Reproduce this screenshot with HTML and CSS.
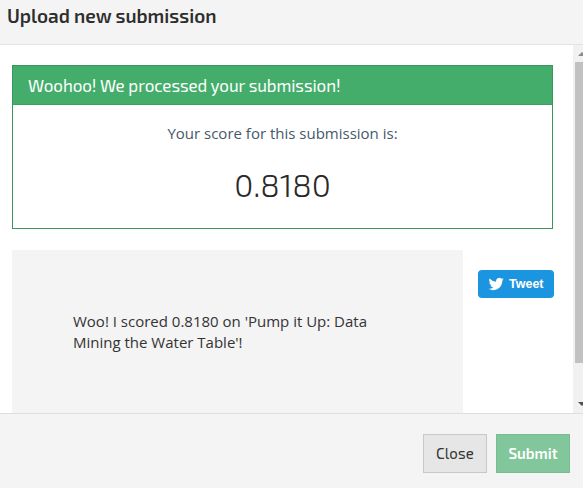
FILE: index.html
```html
<!DOCTYPE html>
<html lang="en">
<head>
<meta charset="utf-8">
<title>Upload new submission</title>
<link rel="stylesheet" href="styles.css">
</head>
<body>
<div class="modal">
  <header class="modal-header"><h1><span>Upload new submission</span></h1></header>
  <main class="modal-body">
    <div class="content">
      <section class="panel">
        <h2 class="panel-heading"><span>Woohoo! We processed your submission!</span></h2>
        <p class="caption"><span>Your score for this submission is:</span></p>
        <div class="score"><span>0.8180</span></div>
      </section>
      <section class="share">
        <p class="message"><span>Woo! I scored 0.8180 on 'Pump it Up: Data</span><br><span>Mining the Water Table'!</span></p>
        <button class="tweet">
          <svg viewBox="0 0 24 24" width="16" height="16"><path fill="#fff" d="M23.643 4.937c-.835.37-1.732.62-2.675.733a4.67 4.67 0 0 0 2.048-2.578 9.3 9.3 0 0 1-2.958 1.13 4.66 4.66 0 0 0-7.938 4.25A13.229 13.229 0 0 1 2.516 3.604a4.66 4.66 0 0 0 1.442 6.22 4.647 4.647 0 0 1-2.11-.583v.06a4.66 4.66 0 0 0 3.737 4.568 4.692 4.692 0 0 1-2.104.08 4.661 4.661 0 0 0 4.352 3.234 9.348 9.348 0 0 1-5.786 1.995 9.5 9.5 0 0 1-1.112-.065 13.175 13.175 0 0 0 7.14 2.093c8.57 0 13.255-7.098 13.255-13.254 0-.2-.005-.402-.014-.602a9.47 9.47 0 0 0 2.323-2.41z"/></svg>
          <span>Tweet</span>
        </button>
      </section>
    </div>
    <div class="scrollbar">
      <svg class="arrow" width="8" height="17" viewBox="0 0 8 17"><path fill="#8b8b8b" d="M3 11L7 7L11 11Z"/></svg>
      <div class="thumb"></div>
      <svg class="arrow" width="8" height="17" viewBox="0 0 8 17"><path fill="#505050" d="M3 6L7 10L11 6Z"/></svg>
    </div>
  </main>
  <footer class="modal-footer">
    <button class="btn close"><span>Close</span></button>
    <button class="btn submit"><span>Submit</span></button>
  </footer>
</div>
</body>
</html>
```
FILE: styles.css
```css
* { box-sizing: border-box; }
body { margin: 0; overflow: hidden; font-family: "Open Sans", sans-serif; color: #333; }
h1, h2, p { margin: 0; font-weight: 400; }
button { font-family: inherit; padding: 0; margin: 0; }
.modal { width: 583px; height: 488px; display: flex; flex-direction: column; background: #f4f4f4; }
.modal-header { height: 45px; padding: 3px 7px; border-bottom: 1px solid #e2e2e2; }
.modal-header h1 { font: 600 19px/25px "Exo 2", Roboto, sans-serif; color: #2e2e2e; }
.modal-body { height: 368px; display: flex; background: #fff; overflow: hidden; }
.content { width: 573px; padding: 20px 20px 0 12px; }
.panel { height: 164px; border: 1px solid #3c9460; text-align: center; }
.panel-heading { height: 39px; padding-left: 15px; background: #45ad6b; border-bottom: 1px solid #3f9c62; color: #fff; text-align: left; font: 400 17px/38px "Exo 2", Roboto, sans-serif; letter-spacing: -0.08px; }
.caption { padding-top: 18px; font-size: 15px; line-height: 21px; color: #46586a; }
.score { margin-top: 18px; font: 300 32px/44px "Exo 2", Roboto, sans-serif; color: #292929; }
.share { display: flex; align-items: flex-start; gap: 15px; margin-top: 21px; }
.message { flex: none; width: 451px; height: 170px; padding: 61px 0 0 61px; background: #f4f4f4; font-size: 15px; line-height: 21px; white-space: nowrap; }
.tweet { flex: none; display: flex; align-items: center; gap: 5px; width: 76px; height: 28px; margin-top: 20px; padding-left: 10px; border: 0; border-radius: 4px; background: #1b95e0; color: #fff; font: 700 12.5px/28px "Liberation Sans", sans-serif; }
.scrollbar { width: 10px; background: #f1f1f1; padding-left: 2px; display: flex; flex-direction: column; }
.thumb { height: 301px; background: #c1c1c1; margin-bottom: 33px; flex: none; }
.arrow { display: block; flex: none; }
.modal-footer { flex: 1; display: flex; justify-content: flex-end; gap: 9px; padding: 20px 13px 0 0; border-top: 1px solid #dedede; }
.btn { height: 39px; border: 1px solid #c8c8c8; font: 400 15px/37px "Exo 2", Roboto, sans-serif; }
.close { width: 64px; background: #e6e6e6; color: #333; letter-spacing: 0.2px; }
.submit { width: 74px; background: #82c79b; border-color: #78bd92; color: #fff; font-weight: 600; }
```
